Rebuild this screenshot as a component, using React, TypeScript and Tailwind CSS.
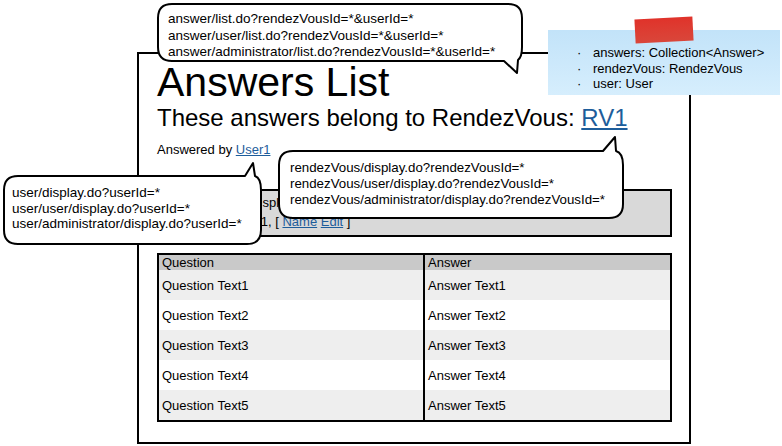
import React from 'react';

interface BubbleProps {
  className: string;
  w: number;
  h: number;
  path: string;
  children: React.ReactNode;
}

// speech bubble: outline + tail drawn as one svg path, text flows on top
const Bubble: React.FC<BubbleProps> = ({ className, w, h, path, children }) => (
  <div className={`absolute ${className}`} style={{ width: w, height: h }}>
    <svg className="absolute inset-0 overflow-visible" width={w} height={h}>
      <path d={path} fill="white" stroke="black" strokeWidth="2" strokeLinejoin="round" />
    </svg>
    <div className="relative">{children}</div>
  </div>
);

const rows = [1, 2, 3, 4, 5];

const App: React.FC = () => {
  return (
    <div className="relative w-[782px] h-[446px] overflow-hidden bg-white pt-[52px] pl-[137px] text-black font-['Liberation_Sans',Arial,sans-serif]">
      {/* Window frame */}
      <div className="w-[554px] h-[392px] border-2 border-black pl-[18px] pt-[8px]">
        <h1 className="text-[41px] leading-[41px]">Answers List</h1>
        <h2 className="mt-[1px] text-[24px] leading-[28px]">
          These answers belong to RendezVous:{' '}
          <span className="text-[#1d5d9b] underline underline-offset-2">RV1</span>
        </h2>
        <p className="mt-[10px] text-[13px] leading-[16px]">
          Answered by <span className="text-[#1d5d9b] underline">User1</span>
        </p>

        {/* Grey info bar */}
        <div className="mt-[31px] w-[515px] h-[48px] bg-[#d9d9d9] border-2 border-black px-[3px] pt-[2px] text-[13px] leading-[19px]">
          <div>List of answers display</div>
          <div>
            RendezVous: RV1, [ <span className="text-[#1d5d9b] underline">Name</span>{' '}
            <span className="text-[#1d5d9b] underline">Edit</span> ]
          </div>
        </div>

        {/* Table */}
        <div className="mt-[16px] w-[515px] border-2 border-black text-[13px]">
          <div className="flex h-[15px] bg-[#c9c9c9] leading-[15px]">
            <div className="w-[264px] pl-[3px]">Question</div>
            <div className="flex-1 border-l-2 border-black pl-[3px]">Answer</div>
          </div>
          {rows.map((n) => (
            <div key={n} className={`flex h-[30px] ${n % 2 === 1 ? 'bg-[#eeeeee]' : 'bg-white'}`}>
              <div className="w-[264px] pl-[3px] flex items-center pt-[2px]">Question Text{n}</div>
              <div className="flex-1 border-l-2 border-black pl-[3px] flex items-center pt-[2px]">Answer Text{n}</div>
            </div>
          ))}
        </div>
      </div>

      {/* Sticky note */}
      <div className="absolute left-[548px] top-[30px] w-[232px] h-[65px] bg-gradient-to-b from-[#c2e3f9] to-[#d6eefd] text-[13px] leading-[15.5px] pt-[15px]">
        {['answers: Collection<Answer>', 'rendezVous: RendezVous', 'user: User'].map((t) => (
          <div key={t} className="flex">
            <span className="w-[45px] pl-[29px]">·</span>
            <span>{t}</span>
          </div>
        ))}
      </div>
      <div className="absolute left-[635px] top-[18px] w-[58px] h-[24px] bg-gradient-to-b from-[#e0322a] to-[#d9463a] -rotate-[3deg]" />

      {/* Bubbles */}
      <Bubble
        className="left-[157px] top-[3px]"
        w={366}
        h={59}
        path="M15,1 H351 Q365,1 365,15 V44 Q365,54 361,57 L360,70 L347,58 H15 Q1,58 1,44 V15 Q1,1 15,1 Z"
      >
        <div className="pl-[11px] pt-[8px] text-[13.5px] leading-[16.5px]">
          <div>answer/list.do?rendezVousId=*&amp;userId=*</div>
          <div>answer/user/list.do?rendezVousId=*&amp;userId=*</div>
          <div>answer/administrator/list.do?rendezVousId=*&amp;userId=*</div>
        </div>
      </Bubble>

      <Bubble
        className="left-[278px] top-[150px]"
        w={346}
        h={69}
        path="M15,1 H325 L337,-13 L338,1 Q345,3 345,15 V54 Q345,68 331,68 H15 Q1,68 1,54 V15 Q1,1 15,1 Z"
      >
        <div className="pl-[12px] pt-[10px] text-[13.3px] leading-[16px]">
          <div>rendezVous/display.do?rendezVousId=*</div>
          <div>rendezVous/user/display.do?rendezVousId=*</div>
          <div>rendezVous/administrator/display.do?rendezVousId=*</div>
        </div>
      </Bubble>

      <Bubble
        className="left-[3px] top-[175px]"
        w={259}
        h={70}
        path="M15,1 H242 L250,-12 L252,1 Q258,3 258,15 V55 Q258,69 244,69 H15 Q1,69 1,55 V15 Q1,1 15,1 Z"
      >
        <div className="pl-[9px] pt-[10px] text-[13.5px] leading-[15.5px]">
          <div>user/display.do?userId=*</div>
          <div>user/user/display.do?userId=*</div>
          <div>user/administrator/display.do?userId=*</div>
        </div>
      </Bubble>
    </div>
  );
};

export default App;
